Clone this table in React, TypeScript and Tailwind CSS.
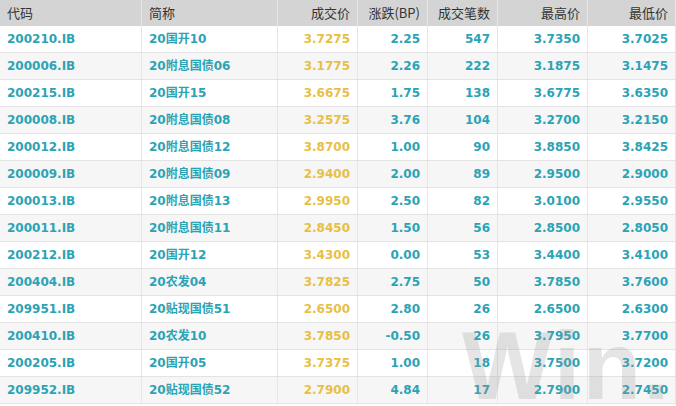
import React from "react";

const rows: [string, string, string, string, string, string, string][] = [
  ["200210.IB", "20国开10", "3.7275", "2.25", "547", "3.7350", "3.7025"],
  ["200006.IB", "20附息国债06", "3.1775", "2.26", "222", "3.1875", "3.1475"],
  ["200215.IB", "20国开15", "3.6675", "1.75", "138", "3.6775", "3.6350"],
  ["200008.IB", "20附息国债08", "3.2575", "3.76", "104", "3.2700", "3.2150"],
  ["200012.IB", "20附息国债12", "3.8700", "1.00", "90", "3.8850", "3.8425"],
  ["200009.IB", "20附息国债09", "2.9400", "2.00", "89", "2.9500", "2.9000"],
  ["200013.IB", "20附息国债13", "2.9950", "2.50", "82", "3.0100", "2.9550"],
  ["200011.IB", "20附息国债11", "2.8450", "1.50", "56", "2.8500", "2.8050"],
  ["200212.IB", "20国开12", "3.4300", "0.00", "53", "3.4400", "3.4100"],
  ["200404.IB", "20农发04", "3.7825", "2.75", "50", "3.7850", "3.7600"],
  ["209951.IB", "20贴现国债51", "2.6500", "2.80", "26", "2.6500", "2.6300"],
  ["200410.IB", "20农发10", "3.7850", "-0.50", "26", "3.7950", "3.7700"],
  ["200205.IB", "20国开05", "3.7375", "1.00", "18", "3.7500", "3.7200"],
  ["209952.IB", "20贴现国债52", "2.7900", "4.84", "17", "2.7900", "2.7450"],
];

const widths = ["w-[142px]", "w-[136px]", "w-[80px]", "w-[70px]", "w-[70px]", "w-[90px]", "w-[88px]"];
const headers = ["代码", "简称", "成交价", "涨跌(BP)", "成交笔数", "最高价", "最低价"];

export default function App() {
  return (
    <div className="relative w-[676px] h-[406px] overflow-hidden bg-white">
      <div className="flex h-[26px] bg-[#d4d4d4] text-[13px] text-[#333] font-['Noto_Sans_CJK_SC','DejaVu_Sans',sans-serif]">
        {headers.map((h, i) => (
          <div
            key={h}
            className={`${widths[i]} shrink-0 flex items-center px-[7px] border-r border-[#e6e6e6] ${i < 2 ? "justify-start" : "justify-end"}`}
          >
            {h}
          </div>
        ))}
      </div>
      {rows.map((r, ri) => (
        <div
          key={r[0]}
          className={`flex h-[27px] border-b border-[#e3e3e3] text-[12px] font-bold font-['DejaVu_Sans','Noto_Sans_CJK_SC',sans-serif] ${ri % 2 === 0 ? "bg-white" : "bg-[#f6f6f6]"}`}
        >
          {r.map((c, i) => (
            <div
              key={i}
              className={`${widths[i]} shrink-0 flex items-center px-[7px] border-r border-[#e6e6e6] ${i < 2 ? "justify-start" : "justify-end"} ${i === 2 ? "text-[#e8bf45]" : "text-[#2ba3b5]"}`}
            >
              {c}
            </div>
          ))}
        </div>
      ))}
      <div
        aria-hidden="true"
        className="absolute left-[462px] top-[318px] text-[96px] font-bold leading-none text-[#9a9a9a] opacity-25 pointer-events-none tracking-[2px] font-['Liberation_Sans',sans-serif]"
      >
        Win.l
      </div>
    </div>
  );
}
